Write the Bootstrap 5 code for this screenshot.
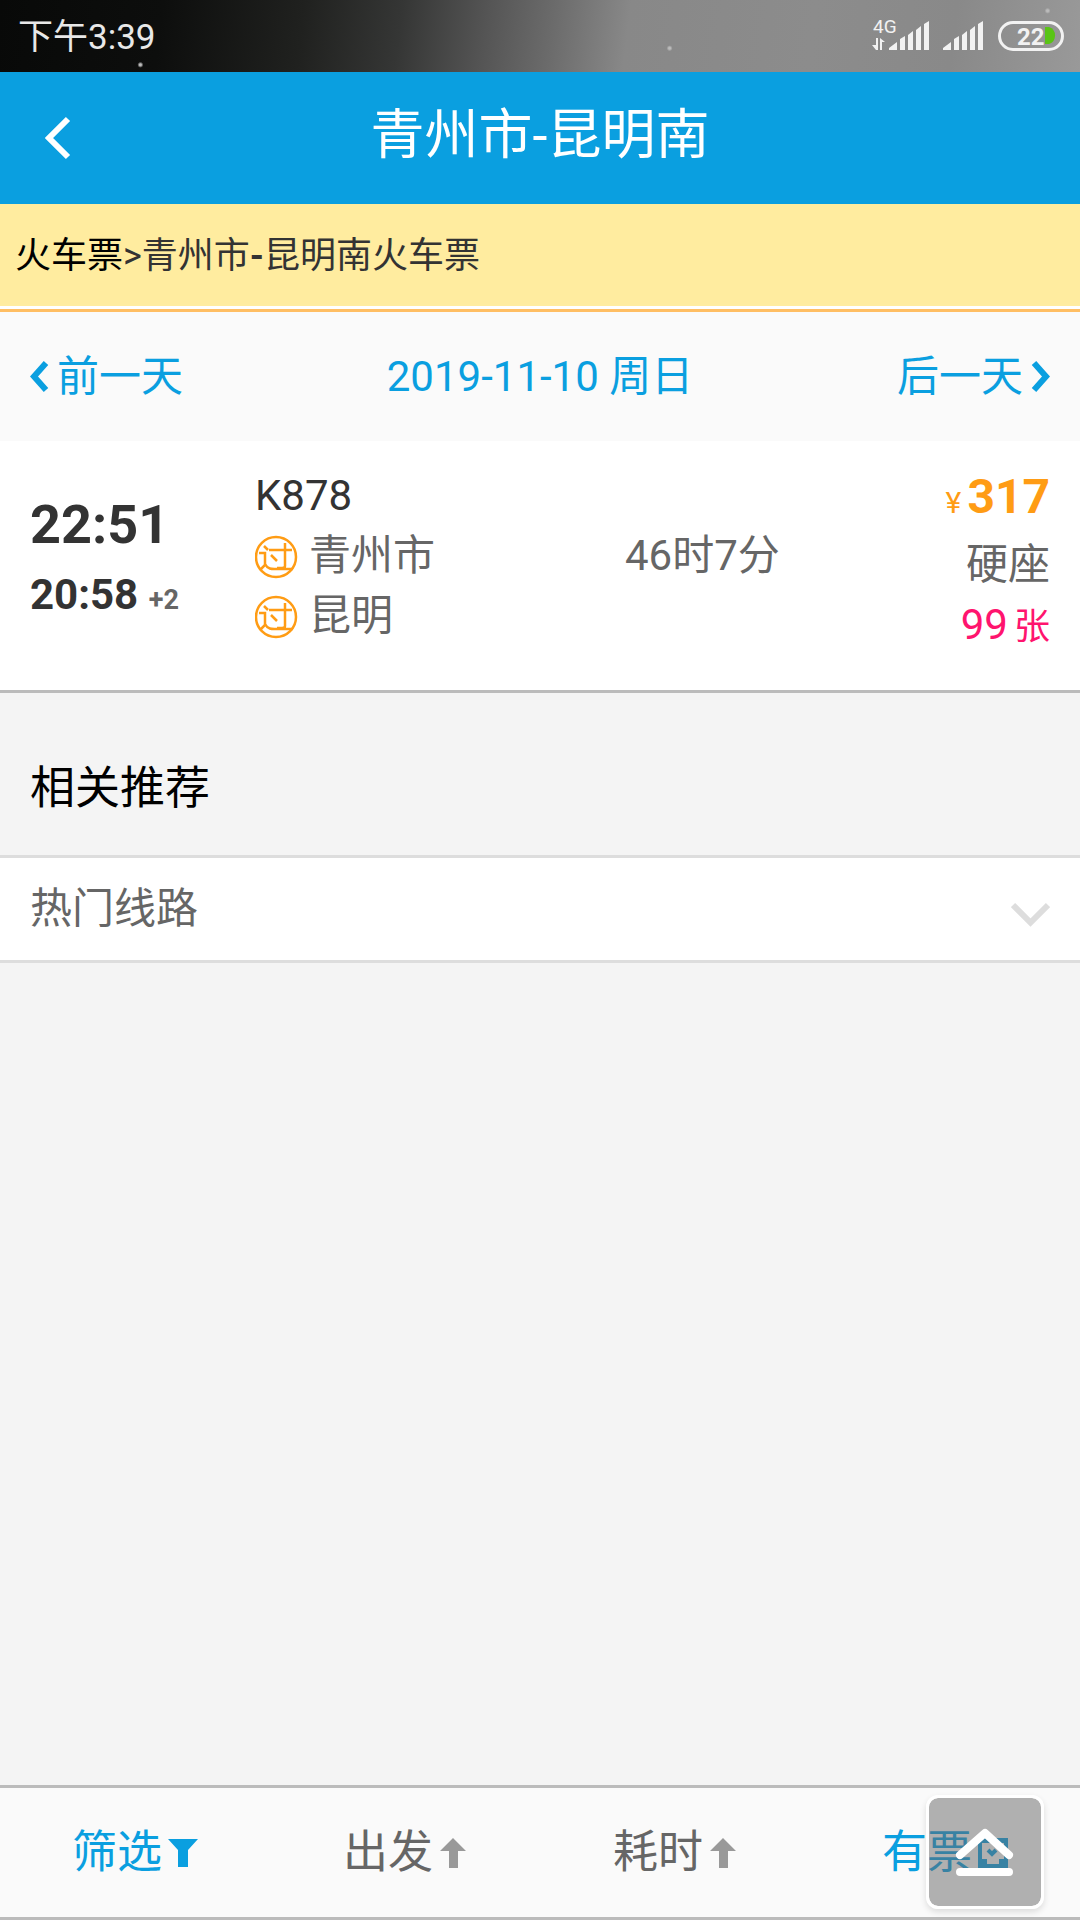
<!DOCTYPE html>
<html lang="zh-CN">
<head>
<meta charset="utf-8">
<meta name="viewport" content="width=device-width, initial-scale=1">
<title>青州市-昆明南火车票</title>
<link href="https://cdn.jsdelivr.net/npm/bootstrap@5.3.0/dist/css/bootstrap.min.css" rel="stylesheet">
<style>
body { font-family: Roboto, "Noto Sans CJK SC", sans-serif; background: #f4f4f4; color: #333; font-size: 42px; line-height: 60px; }
a { text-decoration: none; color: inherit; }
svg { display: block; flex: none; }
.statusbar { height: 72px; padding: 4px 16px 0 18px; color: #e8e8e8; font-size: 35px;
  background:
    radial-gradient(circle at 13% 90%, #bbb 0 1px, transparent 3px),
    radial-gradient(circle at 62% 67%, #bbb 0 1px, transparent 3px),
    radial-gradient(circle at 97% 15%, #bbb 0 1px, transparent 3px),
    linear-gradient(97deg, #080908 0%, #0d0e0d 15%, #20211f 28%, #353635 37%, #555 45%, #6b6b6b 51%, #888 58%, #8c8c8c 75%, #898989 88%, #999 100%); }
.titlebar { height: 132px; background: #0a9fe0; color: #fff; }
.titlebar h1 { font-size: 54px; line-height: 72px; font-weight: 400; padding-bottom: 4px; }
.back-link { left: 45px; top: 44px; }
.crumbs { height: 102px; padding: 2px 15px 0; background: #ffec9f; font-size: 36px; }
.crumbs a { color: #000; }
.rule-orange { border-top: 3px solid #fff; border-bottom: 3px solid #ffbe63; }
.datebar { height: 129px; padding: 0 30px; background: #fafafa; color: #0a9fe0; }
.train { height: 252px; padding: 24px 30px 0; background: #fff; border-bottom: 3px solid #bbb; }
.times { width: 225px; padding-top: 22px; font-weight: 700; line-height: 76px; }
.depart-time { font-size: 54px; }
.arrive-time { line-height: 64px; }
.day-shift { font-size: 27px; color: #666; }
.stations { padding-top: 1px; }
.stop-mark { color: #ff9c14; }
.soft { color: #666; }
.duration { width: 255px; padding-top: 61px; }
.fare { width: 170px; }
.price { color: #ff9c14; font-size: 48px; font-weight: 700; line-height: 64px; }
.price span { font-size: 30px; font-weight: 400; margin-right: 6px; }
.seats { color: #ff146e; }
.seats span { font-size: 36px; margin-left: 6px; }
.related-title { font-size: 45px; line-height: 72px; font-weight: 400; color: #000; padding: 60px 30px 30px; }
.routes { height: 108px; padding: 0 30px; background: #fff; border: solid #ddd; border-width: 3px 0; color: #666; text-align: left; }
.filterbar { height: 135px; background: #fafafa; border: solid #bbb; border-width: 3px 0; }
.filter-btn { flex: 1 1 0; font-size: 45px; color: #666; border: 0; background: none; padding: 0; gap: 6px; }
.filter-btn.is-on { color: #0a9fe0; }
.to-top { right: 36px; bottom: 8px; width: 118px; height: 114px; padding: 0; border: 3px solid #fff; border-radius: 12px; background: rgba(102,102,102,.5); background-clip: padding-box; box-shadow: 0 3px 6px rgba(0,0,0,.12); }
</style>
<script src="https://cdn.jsdelivr.net/npm/bootstrap@5.3.0/dist/js/bootstrap.bundle.min.js" defer></script>
</head>
<body class="d-flex flex-column min-vh-100">
<div class="statusbar d-flex align-items-center justify-content-between">
  <span>下午3:39</span>
  <svg width="192" height="52" viewBox="872 12 192 52" fill="#f2f2f2" aria-label="4G, 22%">
    <text x="873" y="33" font-size="19" font-family="Roboto">4G</text>
    <path d="M876 38h2v12h-2l-4-5h4zM880 38l5 4h-3v8h-2z"/>
    <g id="signal"><path d="M889 50v-2l8-6v8zM900 50V39l5-3v14zM908 50V35l5-4v19zM916 50V30l5-4v24zM924 50V24l5-3v29z"/></g>
    <use href="#signal" x="54"/>
    <rect x="999.500" y="22.500" width="63" height="27" rx="13.500" fill="none" stroke="#f2f2f2" stroke-width="3"/>
    <path d="M1045 27h4a9 9 0 0 1 0 17h-4z" fill="#5ac414"/>
    <text x="1017" y="45" font-size="24" font-weight="700" font-family="Roboto">22</text>
  </svg>
</div>
<header class="titlebar position-relative d-flex align-items-center justify-content-center">
  <a class="back-link position-absolute" href="#" aria-label="返回"><svg width="26" height="44" fill="none" stroke="#fff" stroke-width="6"><path d="M23 3 4 22l19 19"/></svg></a>
  <h1 class="m-0">青州市-昆明南</h1>
</header>
<nav class="crumbs d-flex align-items-center" aria-label="位置"><div><a href="#">火车票</a>&gt;青州市<b>-</b>昆明南火车票</div></nav>
<div class="rule-orange"></div>
<nav class="datebar d-flex align-items-center justify-content-between">
  <a href="#" class="d-flex align-items-center gap-2"><svg width="19" height="31" fill="none" stroke="currentColor" stroke-width="6"><path d="M16 2 4 15.500 16 29"/></svg>前一天</a>
  <a href="#">2019-11-10 周日</a>
  <a href="#" class="d-flex align-items-center gap-2">后一天<svg width="19" height="31" fill="none" stroke="currentColor" stroke-width="6"><path d="M3 2l12 13.500L3 29"/></svg></a>
</nav>
<main class="flex-grow-1">
  <a href="#" class="train d-flex">
    <div class="times"><div class="depart-time">22:51</div><div class="arrive-time">20:58 <span class="day-shift">+2</span></div></div>
    <div class="stations flex-grow-1">
      <div>K878</div>
      <div class="d-flex align-items-center soft"><svg class="stop-mark me-2" width="46" height="46" viewBox="0 0 46 46" fill="none" stroke="currentColor" stroke-width="2.500"><circle cx="21" cy="24" r="20"/><path d="M9 13l4 4M4 20h6v12l-5 5M10 31c3 6 8 5 12 5h16M14 17h23M30 10v23q0 2-3 2h-5M16 22l6 6"/></svg>青州市</div>
      <div class="d-flex align-items-center soft"><svg class="stop-mark me-2" width="46" height="46" viewBox="0 0 46 46" fill="none" stroke="currentColor" stroke-width="2.500"><circle cx="21" cy="24" r="20"/><path d="M9 13l4 4M4 20h6v12l-5 5M10 31c3 6 8 5 12 5h16M14 17h23M30 10v23q0 2-3 2h-5M16 22l6 6"/></svg>昆明</div>
    </div>
    <div class="duration soft">46时7分</div>
    <div class="fare text-end text-nowrap"><div class="price"><span>¥</span>317</div><div class="soft">硬座</div><div class="seats">99<span>张</span></div></div>
  </a>
  <h2 class="related-title m-0">相关推荐</h2>
  <button type="button" class="routes w-100 d-flex align-items-center justify-content-between" aria-expanded="false">热门线路<svg width="39" height="36" fill="none" stroke="#ddd" stroke-width="6"><path d="M2 14l17.500 17.500L37 14"/></svg></button>
</main>
<footer class="filterbar position-relative d-flex">
  <button type="button" class="filter-btn is-on d-flex align-items-center justify-content-center">筛选<svg width="30" height="30" fill="currentColor"><path d="M0 1h30L20 12v17H10V12z"/></svg></button>
  <button type="button" class="filter-btn d-flex align-items-center justify-content-center">出发<svg width="28" height="30" fill="#999"><path d="M14 0l13 13h-8v17h-9V13H1z"/></svg></button>
  <button type="button" class="filter-btn d-flex align-items-center justify-content-center">耗时<svg width="28" height="30" fill="#999"><path d="M14 0l13 13h-8v17h-9V13H1z"/></svg></button>
  <button type="button" class="filter-btn is-on d-flex align-items-center justify-content-center">有票<svg width="30" height="30" fill="currentColor"><path fill-rule="evenodd" d="M0 0h30v30H0zM4 5v16h5v5h12v-5h5V5z"/><path d="M10 12l4 4 4-4" fill="none" stroke="currentColor" stroke-width="4"/></svg></button>
  <button type="button" class="to-top position-absolute" aria-label="回到顶部"><svg width="112" height="108" fill="none" stroke="#fff" stroke-width="8" stroke-linecap="round" stroke-linejoin="round"><path d="M31 57l25-22 24 22M31 74h49"/></svg></button>
</footer>
</body>
</html>
